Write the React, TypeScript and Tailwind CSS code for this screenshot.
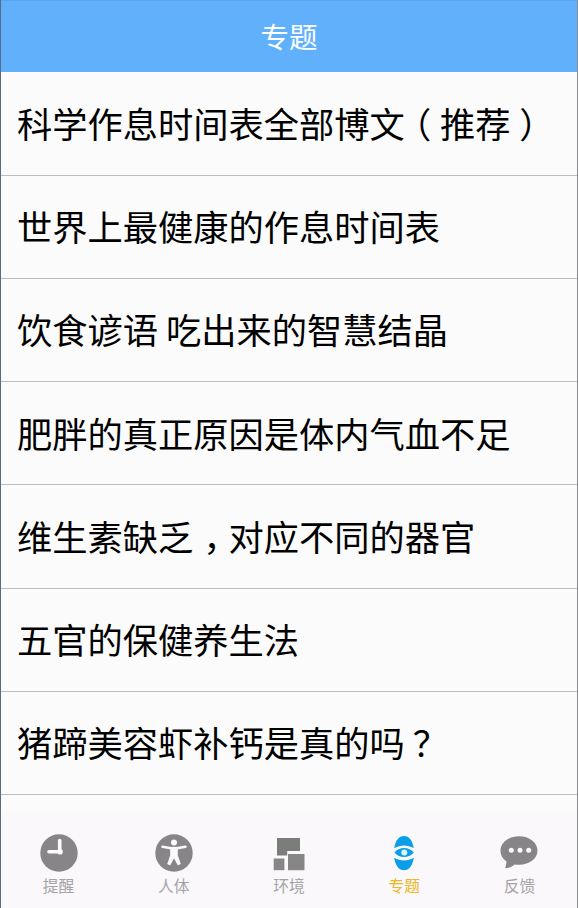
import type { ReactNode } from "react";

const topics = [
  "科学作息时间表全部博文（推荐）",
  "世界上最健康的作息时间表",
  "饮食谚语 吃出来的智慧结晶",
  "肥胖的真正原因是体内气血不足",
  "维生素缺乏，对应不同的器官",
  "五官的保健养生法",
  "猪蹄美容虾补钙是真的吗？",
];

const ClockIcon = () => (
  <svg viewBox="0 0 40 40" className="size-10">
    <circle cx="20" cy="20" r="18.7" fill="#878587" />
    <path d="M20.7 7.5V18.8H10" fill="none" stroke="#fcfafc" strokeWidth="3.6" strokeLinecap="round" strokeLinejoin="round" />
    <circle cx="21" cy="18.7" r="2.8" fill="#fcfafc" />
  </svg>
);

const BodyIcon = () => (
  <svg viewBox="0 0 40 40" className="size-10">
    <circle cx="20" cy="20" r="18.7" fill="#878587" />
    <circle cx="20" cy="9.6" r="3" fill="#fcfafc" />
    <path d="M8.5 13.8L17 15.2H23L31.5 13.8" fill="none" stroke="#fcfafc" strokeWidth="2.5" strokeLinecap="round" />
    <path d="M16.5 14.3H23.5L23.3 22L26.3 31L23.9 31.8L20 24.5L16.1 31.8L13.7 31L16.7 22Z" fill="#fcfafc" stroke="#fcfafc" strokeWidth="0.8" strokeLinejoin="round" />
  </svg>
);

const BlocksIcon = () => (
  <svg viewBox="0 0 40 40" className="size-10">
    <path d="M8 5H31V18H18.2V22.6H8Z" fill="#7b7d7b" />
    <rect x="4.7" y="25.5" width="10.7" height="11.7" fill="#878687" />
    <rect x="19" y="21" width="16.5" height="16.2" fill="#878687" />
  </svg>
);

const EyeIcon = () => (
  <svg viewBox="0 0 40 40" className="size-10">
    <path d="M10.2 15.2C11.5 7.3 15 3 20 3S28.5 7.3 29.8 15.2C23.5 11.7 16.5 11.7 10.2 15.2Z" fill="#0a9de8" />
    <path d="M10.2 24.8C11.5 33 15 37.3 20 37.3S28.5 33 29.8 24.8C23.5 28.3 16.5 28.3 10.2 24.8Z" fill="#0a9de8" />
    <path d="M10.5 19.5C15 13.4 25 13.4 29.8 19.5C25 25.6 15 25.6 10.5 19.5Z" fill="#0a9de8" />
    <circle cx="20.3" cy="19.5" r="3" fill="#d9f4ff" />
  </svg>
);

const ChatIcon = () => (
  <svg viewBox="0 0 40 40" className="size-10">
    <path d="M20 3.2C9.500 3.200 1.500 9.500 1.500 17.500C1.500 22.500 4 26 7.400 28.300C7.400 31 6.700 33 6.200 35.300C10.200 34.800 13.400 33.500 15.700 31.400C29 33.200 38.500 26.500 38.500 17.500C38.500 9.500 30.500 3.200 20 3.200Z" fill="#878587" />
    <g fill="#fcfafc">
      <circle cx="12.3" cy="17.2" r="2.5" />
      <circle cx="21" cy="17.2" r="2.5" />
      <circle cx="29.7" cy="17.2" r="2.5" />
    </g>
  </svg>
);

const tabs: { label: string; icon: ReactNode; active?: boolean }[] = [
  { label: "提醒", icon: <ClockIcon /> },
  { label: "人体", icon: <BodyIcon /> },
  { label: "环境", icon: <BlocksIcon /> },
  { label: "专题", icon: <EyeIcon />, active: true },
  { label: "反馈", icon: <ChatIcon /> },
];

const punctuation: Record<string, string> = {
  "（": "inline-block w-[1em] text-center [font-feature-settings:'halt']",
  "）": "inline-block w-[1em] text-center [font-feature-settings:'halt']",
  "，": "inline-block w-[1em] pl-[10px] [font-feature-settings:'halt']",
  "？": "inline-block w-[1em] pl-[8px]",
};

function Title({ text }: { text: string }) {
  return (
    <>
      {text.split(/([（），？])/).filter(Boolean).map((part, i) => (
        <span key={i} className={punctuation[part]}>{part}</span>
      ))}
    </>
  );
}

export default function App() {
  return (
    <div className="flex h-[908px] w-[578px] flex-col overflow-hidden border-x border-l-[#5b6b80] border-r-[#8c8c90] bg-[#fbfbfb] font-['Noto_Sans_CJK_SC',sans-serif]">
      <header className="-mr-px flex h-[72px] shrink-0 items-center justify-center border-t border-r border-t-[#5aa5e8] border-r-[#3f7ebc] bg-[#60b0fc] pb-px text-[28.5px] leading-none text-white">
        专题
      </header>
      <ul className="h-[740px] shrink-0 pt-[0.3px]">
        {topics.map((topic) => (
          <li
            key={topic}
            className="flex h-[103.25px] items-center border-b border-[#bdbdbd] pb-[2px] pl-4 text-[35.25px] leading-none whitespace-pre text-black"
          >
            <div><Title text={topic} /></div>
          </li>
        ))}
      </ul>
      <nav className="grid flex-1 grid-cols-5 bg-[#fbf8fb]">
        {tabs.map((tab) => (
          <div key={tab.label} className="flex flex-col items-center pt-[21px]">
            {tab.icon}
            <span className={tab.active ? "mt-[5px] text-[15.75px] leading-4 text-[#ecb624]" : "mt-[5px] text-[15.75px] leading-4 text-[#a5a3a5]"}>
              {tab.label}
            </span>
          </div>
        ))}
      </nav>
    </div>
  );
}
